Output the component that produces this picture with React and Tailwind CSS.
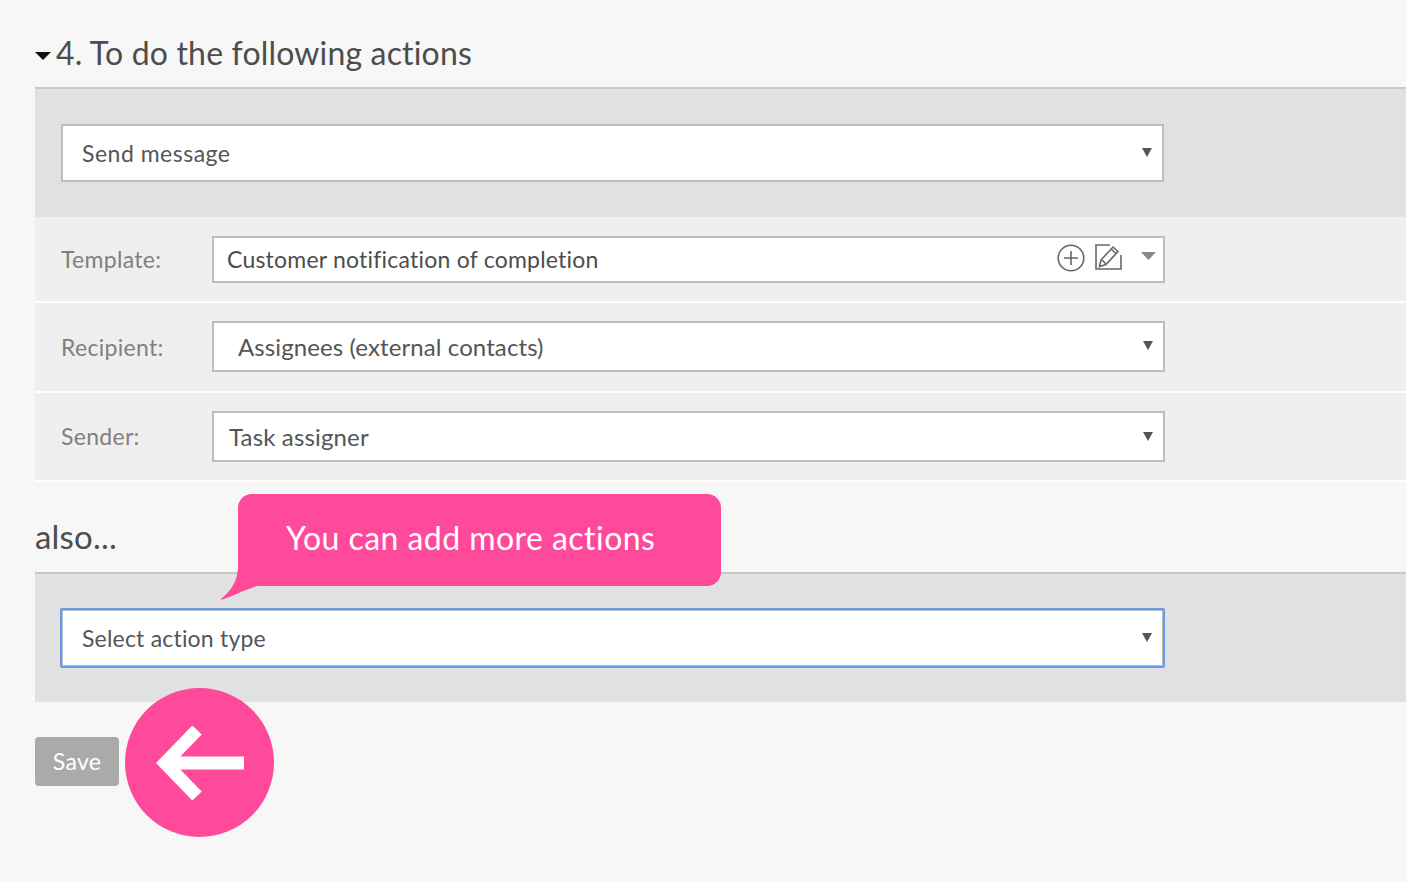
const FONT = "font-['Lato','Noto_Sans',sans-serif] [font-variant-ligatures:none]";

const Arrow = ({ className }) => (
  <svg className={`absolute top-1/2 -mt-[6px] ${className}`} width="10" height="10" viewBox="0 0 10 10">
    <path d="M0 1h10L5 10z" fill="#555" />
  </svg>
);

function SelectBox({ text, className, textClass, arrowClass = "right-[10px]" }) {
  return (
    <div className={`relative flex items-center bg-white border-2 border-[#bdbdbd] ${className}`}>
      <span className={`text-[#555] ${textClass}`}>{text}</span>
      <Arrow className={arrowClass} />
    </div>
  );
}

function FormRow({ label, height, children }) {
  return (
    <div className={`flex items-center bg-[#efefef] border-b-2 border-white pl-[26px] ${height}`}>
      <div className="w-[151px] text-[23px] tracking-[0.3px] text-[#808080]">{label}</div>
      {children}
    </div>
  );
}

export default function App() {
  return (
    <div className={`relative h-[882px] overflow-hidden bg-[#f7f7f7] pl-[35px] ${FONT}`}>
      <div className="flex items-center h-[87px] pt-[19px]">
        <svg width="16" height="8" viewBox="0 0 16 8" className="mt-[6px] mr-[5px]">
          <path d="M0 0h16L8 8z" fill="#111" />
        </svg>
        <h2 className="text-[32px] tracking-[0.17px] text-[#4d4d4d] font-normal">4. To do the following actions</h2>
      </div>

      <div className="bg-[#e1e1e1] border-t-2 border-[#c8c8c8] h-[130px] pt-[35px] pl-[26px]">
        <SelectBox text="Send message" className="w-[1103px] h-[58px] pl-[19px]" textClass="text-[23px] tracking-[0.5px]" />
      </div>

      <FormRow label="Template:" height="h-[86px]">
        <div className="relative flex items-center bg-white border-2 border-[#bdbdbd] w-[953px] h-[47px] pl-[13px]">
          <span className="text-[23px] tracking-[0.22px] text-[#4d4d4d]">Customer notification of completion</span>
          <svg className="absolute left-[842px] top-[5px]" width="30" height="30" viewBox="0 0 30 30" fill="none" stroke="#666" strokeWidth="1.6">
            <circle cx="15" cy="15" r="12.8" />
            <path d="M15 8v14M8 15h14" />
          </svg>
          <svg className="absolute left-[880px] top-[4px]" width="28" height="29" viewBox="0 0 28 29" fill="none" stroke="#666" strokeWidth="1.6">
            <path d="M16 3H2v24h25V13" />
            <path d="M7 18l12-13 5 4.500-12 13-6.500 2z" />
            <path d="M17 7l5 4.500M8 18l4 4" />
          </svg>
          <svg className="absolute left-[927px] top-[14px]" width="15" height="8" viewBox="0 0 15 8">
            <path d="M0 0h15L7.500 8z" fill="#888" />
          </svg>
        </div>
      </FormRow>

      <FormRow label="Recipient:" height="h-[90px]">
        <SelectBox text="Assignees (external contacts)" className="w-[953px] h-[51px] -mt-[2px] pl-[24px]" textClass="text-[24px] tracking-[0.1px] translate-y-[1px]" />
      </FormRow>

      <FormRow label="Sender:" height="h-[89px]">
        <SelectBox text="Task assigner" className="w-[953px] h-[51px] pl-[15px]" textClass="text-[24px] tracking-[0.15px]" />
      </FormRow>

      <div className="flex items-center h-[90px] pt-[19px] text-[33px] tracking-[0.2px] text-[#4d4d4d]">also...</div>

      <div className="bg-[#e1e1e1] border-t-2 border-[#c8c8c8] h-[130px] pt-[34px] pl-[25px]">
        <SelectBox
          text="Select action type"
          className="w-[1105px] h-[60px] pl-[20px] !border-[#6699ee] rounded-[2px] shadow-[inset_0_0_0_1px_#bdbdbd]"
          textClass="text-[23px] tracking-[0.2px]"
          arrowClass="right-[11px]"
        />
      </div>

      <button className="block mt-[35px] w-[84px] h-[49px] rounded-[4px] bg-[#aaaaaa] text-[23px] tracking-[0.3px] text-white">Save</button>

      <div className="absolute left-[238px] top-[494px] w-[483px] h-[92px] rounded-[14px] bg-[#ff4a9c] pl-[48px] pt-[23px] text-[32px] tracking-[0.45px] leading-[42px] text-white">
        You can add more actions
        <svg className="absolute left-[-18px] top-[72px]" width="42" height="36" viewBox="0 0 42 36">
          <path d="M18 0C18 14 12 24 0 34C12 31 24 24 37 20L42 0z" fill="#ff4a9c" />
        </svg>
      </div>

      <div className="absolute left-[125px] top-[688px] flex items-center justify-center w-[149px] h-[149px] rounded-full bg-[#ff4a9c]">
        <svg width="88" height="74" viewBox="0 0 88 74" fill="none" stroke="white" strokeWidth="13">
          <path d="M88 37H10" />
          <path d="M41 4L9 37l32 33" />
        </svg>
      </div>
    </div>
  );
}
